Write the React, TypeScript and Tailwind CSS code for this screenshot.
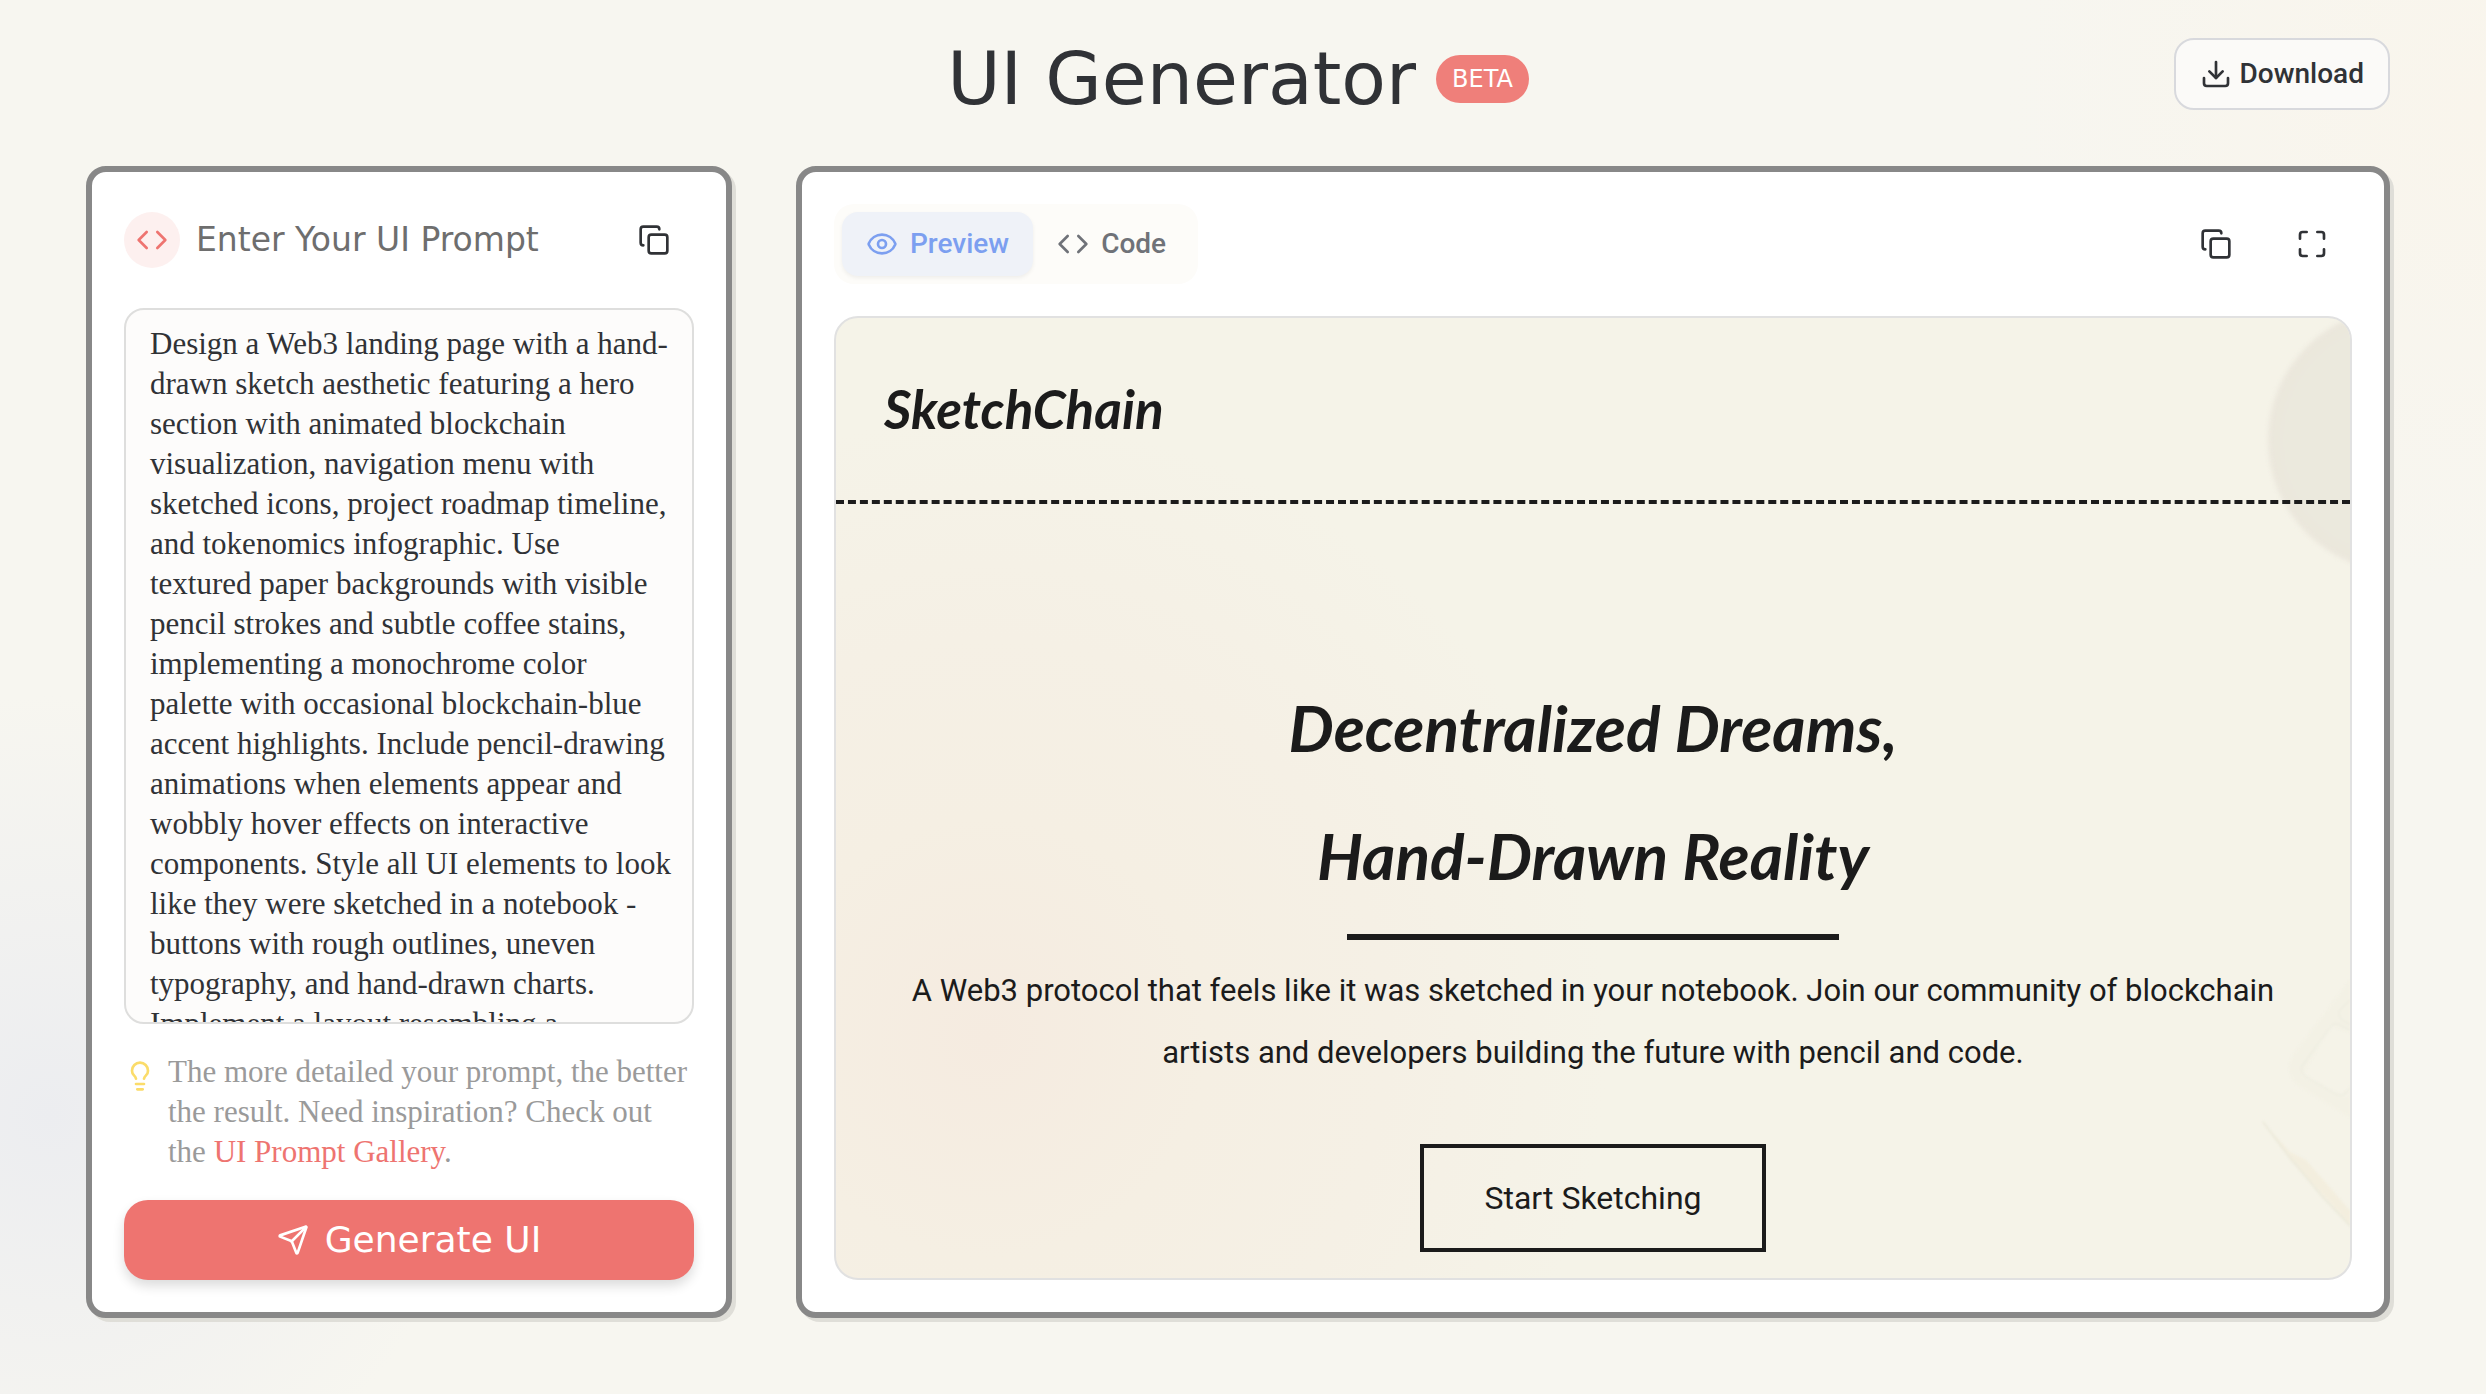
import { useState } from "react";
import { Code, Copy, Download, Eye, Lightbulb, Maximize, Send } from "lucide-react";

const PROMPT = [
  "Design a Web3 landing page with a hand-",
  "drawn sketch aesthetic featuring a hero",
  "section with animated blockchain",
  "visualization, navigation menu with",
  "sketched icons, project roadmap timeline,",
  "and tokenomics infographic. Use",
  "textured paper backgrounds with visible",
  "pencil strokes and subtle coffee stains,",
  "implementing a monochrome color",
  "palette with occasional blockchain-blue",
  "accent highlights. Include pencil-drawing",
  "animations when elements appear and",
  "wobbly hover effects on interactive",
  "components. Style all UI elements to look",
  "like they were sketched in a notebook -",
  "buttons with rough outlines, uneven",
  "typography, and hand-drawn charts.",
  "Implement a layout resembling a",
].join("\n");

const PANEL =
  "flex min-w-0 flex-col gap-8 rounded-[20px] border-[6px] border-[#888888] bg-white p-8 shadow-[4px_4px_0_#dfded8]";

function Header() {
  return (
    <header className="grid grid-cols-[1fr_auto_1fr] items-center pt-[38px] pb-[46px]">
      <div />
      <div className="flex items-center gap-5">
        <h1 className="font-['DejaVu_Sans',sans-serif] text-[73px] leading-[82px] text-[#303236]">UI Generator</h1>
        <span className="flex h-12 items-center rounded-full bg-[#ef7f7a] px-4 font-['DejaVu_Sans',sans-serif] text-2xl text-white">
          BETA
        </span>
      </div>
      <button
        type="button"
        className="flex h-18 items-center gap-2 self-start justify-self-end rounded-[20px] border-2 border-[#d8d9dd] bg-[#fbfaf8] px-6 text-[28px] font-medium text-[#303236]"
      >
        <Download size={32} />
        Download
      </button>
    </header>
  );
}

function PromptPanel() {
  const [prompt, setPrompt] = useState(PROMPT);
  return (
    <section className={PANEL}>
      <div className="flex h-18 items-center">
        <span className="flex size-14 items-center justify-center rounded-full bg-[#fdf0ef] text-[#ee7470]">
          <Code size={32} />
        </span>
        <label htmlFor="prompt" className="ml-4 font-['DejaVu_Sans',sans-serif] text-[33px] text-[#6e6e6e]">
          Enter Your UI Prompt
        </label>
        <button
          type="button"
          aria-label="Copy prompt"
          className="ml-auto flex h-18 w-20 items-center justify-center text-[#303236]"
        >
          <Copy size={32} />
        </button>
      </div>
      <div className="flex flex-1 flex-col gap-7">
        <textarea
          id="prompt"
          value={prompt}
          onChange={(e) => setPrompt(e.target.value)}
          className="block min-h-[400px] flex-1 resize-none overflow-hidden rounded-[20px] border-2 border-[#dededd] bg-[#fdfcfb] pt-3.5 pr-3 pl-6 font-['Liberation_Serif',serif] text-[31px] leading-10 text-[#303236] outline-none"
        />
        <div className="flex gap-3 font-['Liberation_Serif',serif] text-[31px] leading-10 text-[#9a9a9a]">
          <Lightbulb size={32} className="mt-2 shrink-0 text-[#fbdc6a]" />
          <p>
            The more detailed your prompt, the better
            <br />
            the result. Need inspiration? Check out
            <br />
            the{" "}
            <a href="#gallery" className="text-[#ee7470]">
              UI Prompt Gallery
            </a>
            .
          </p>
        </div>
        <button
          type="button"
          className="flex h-20 items-center justify-center gap-4 rounded-3xl bg-[#ee7470] font-['DejaVu_Sans',sans-serif] text-4xl text-white shadow-[0_6px_12px_rgba(0,0,0,0.14)]"
        >
          <Send size={32} />
          Generate UI
        </button>
      </div>
    </section>
  );
}

function Stationery() {
  return (
    <svg
      aria-hidden="true"
      viewBox="0 0 130 340"
      className="pointer-events-none absolute right-0 bottom-0 h-[340px] w-[130px] blur-[1px]"
      fill="none"
    >
      <path
        d="M140 28 L72 118 Q64 132 76 146 L140 186 V158 L124 158 Q112 152 82 138 L110 88 L140 98Z"
        fill="#f3f1e5"
      />
      <path
        d="M112 87 Q117 84 122 88 L150 102 M112 87 L82 128 Q80 134 86 139 L116 156 Q124 160 130 150 L140 138 M140 52 L120 72 Q117 77 122 82 L140 92"
        stroke="#efeee2"
        strokeWidth="2"
      />
      <path d="M43 184 L70 214 L86 222 L140 284 V298 L112 266 L70 222Z" fill="#f3eede" />
      <path d="M43 184 L70 220 L102 258 L140 298" stroke="#eceadb" strokeWidth="2" />
    </svg>
  );
}

function LandingPreview() {
  return (
    <div className="relative flex-1 overflow-hidden rounded-3xl border-2 border-[#e1e1e1] bg-[#f5f3e8] bg-[radial-gradient(circle_at_10%_75%,#f5ebe0_0%,#f5efe3_220px,#f5f0e5_400px,#f5f3e8_620px)] text-[#1b1b1b]">
      <div
        aria-hidden="true"
        className="absolute top-[-10px] right-[-182px] size-[264px] rounded-full bg-[radial-gradient(circle,#ebe9dd_0%,#ebe9dd_60%,#ebe7dc_70%)] blur-[2px]"
      />
      <Stationery />
      <div className="relative flex h-[186px] items-center border-b-4 border-dashed border-[#1b1b1b] px-12">
        <span className="font-['Lato',sans-serif] text-[53px] font-bold italic">SketchChain</span>
      </div>
      <div className="relative flex flex-col items-center px-12 pt-40 pb-6 text-center">
        <h2 className="font-['Lato',sans-serif] text-[64px] leading-[128px] font-bold italic">
          Decentralized Dreams,
          <br />
          Hand-Drawn Reality
        </h2>
        <div className="mt-3.5 h-1.5 w-[492px] bg-[#1b1b1b]" />
        <p className="mt-5 text-[31px] leading-[62px]">
          A Web3 protocol that feels like it was sketched in your notebook. Join our community of blockchain
          <br />
          artists and developers building the future with pencil and code.
        </p>
        <button type="button" className="mt-15 h-[108px] border-4 border-[#1b1b1b] px-15 text-[32px]">
          Start Sketching
        </button>
      </div>
    </div>
  );
}

function ResultPanel() {
  return (
    <section className={PANEL}>
      <div className="flex items-center justify-between">
        <div role="tablist" className="flex rounded-[20px] bg-[#fdfcf9] p-2 text-[28px] font-medium">
          <button
            type="button"
            role="tab"
            aria-selected="true"
            className="flex h-16 items-center gap-3 rounded-2xl bg-[#eff2f8] px-6 text-[#7c9ff0] shadow-[0_2px_4px_rgba(0,0,0,0.06)]"
          >
            <Eye size={32} />
            Preview
          </button>
          <button
            type="button"
            role="tab"
            aria-selected="false"
            className="flex h-16 items-center gap-3 rounded-2xl px-6 text-[#6f7278]"
          >
            <Code size={32} />
            Code
          </button>
        </div>
        <div className="flex gap-4 text-[#303236]">
          <button type="button" aria-label="Copy result" className="flex h-18 w-20 items-center justify-center">
            <Copy size={32} />
          </button>
          <button type="button" aria-label="Full screen" className="flex h-18 w-20 items-center justify-center">
            <Maximize size={32} />
          </button>
        </div>
      </div>
      <LandingPreview />
    </section>
  );
}

export default function App() {
  return (
    <div className="flex min-h-screen flex-col bg-[#f7f6f0] bg-[radial-gradient(circle_at_2%_80%,#ecedf0_0px,#f7f6f000_420px),radial-gradient(circle_at_100%_8%,#f9f5ec_0px,#f7f6f000_480px)] pr-24 pb-19 pl-[86px] font-['Roboto',sans-serif]">
      <Header />
      <main className="grid flex-1 grid-cols-[minmax(0,646fr)_minmax(0,1594fr)] gap-16">
        <PromptPanel />
        <ResultPanel />
      </main>
    </div>
  );
}
